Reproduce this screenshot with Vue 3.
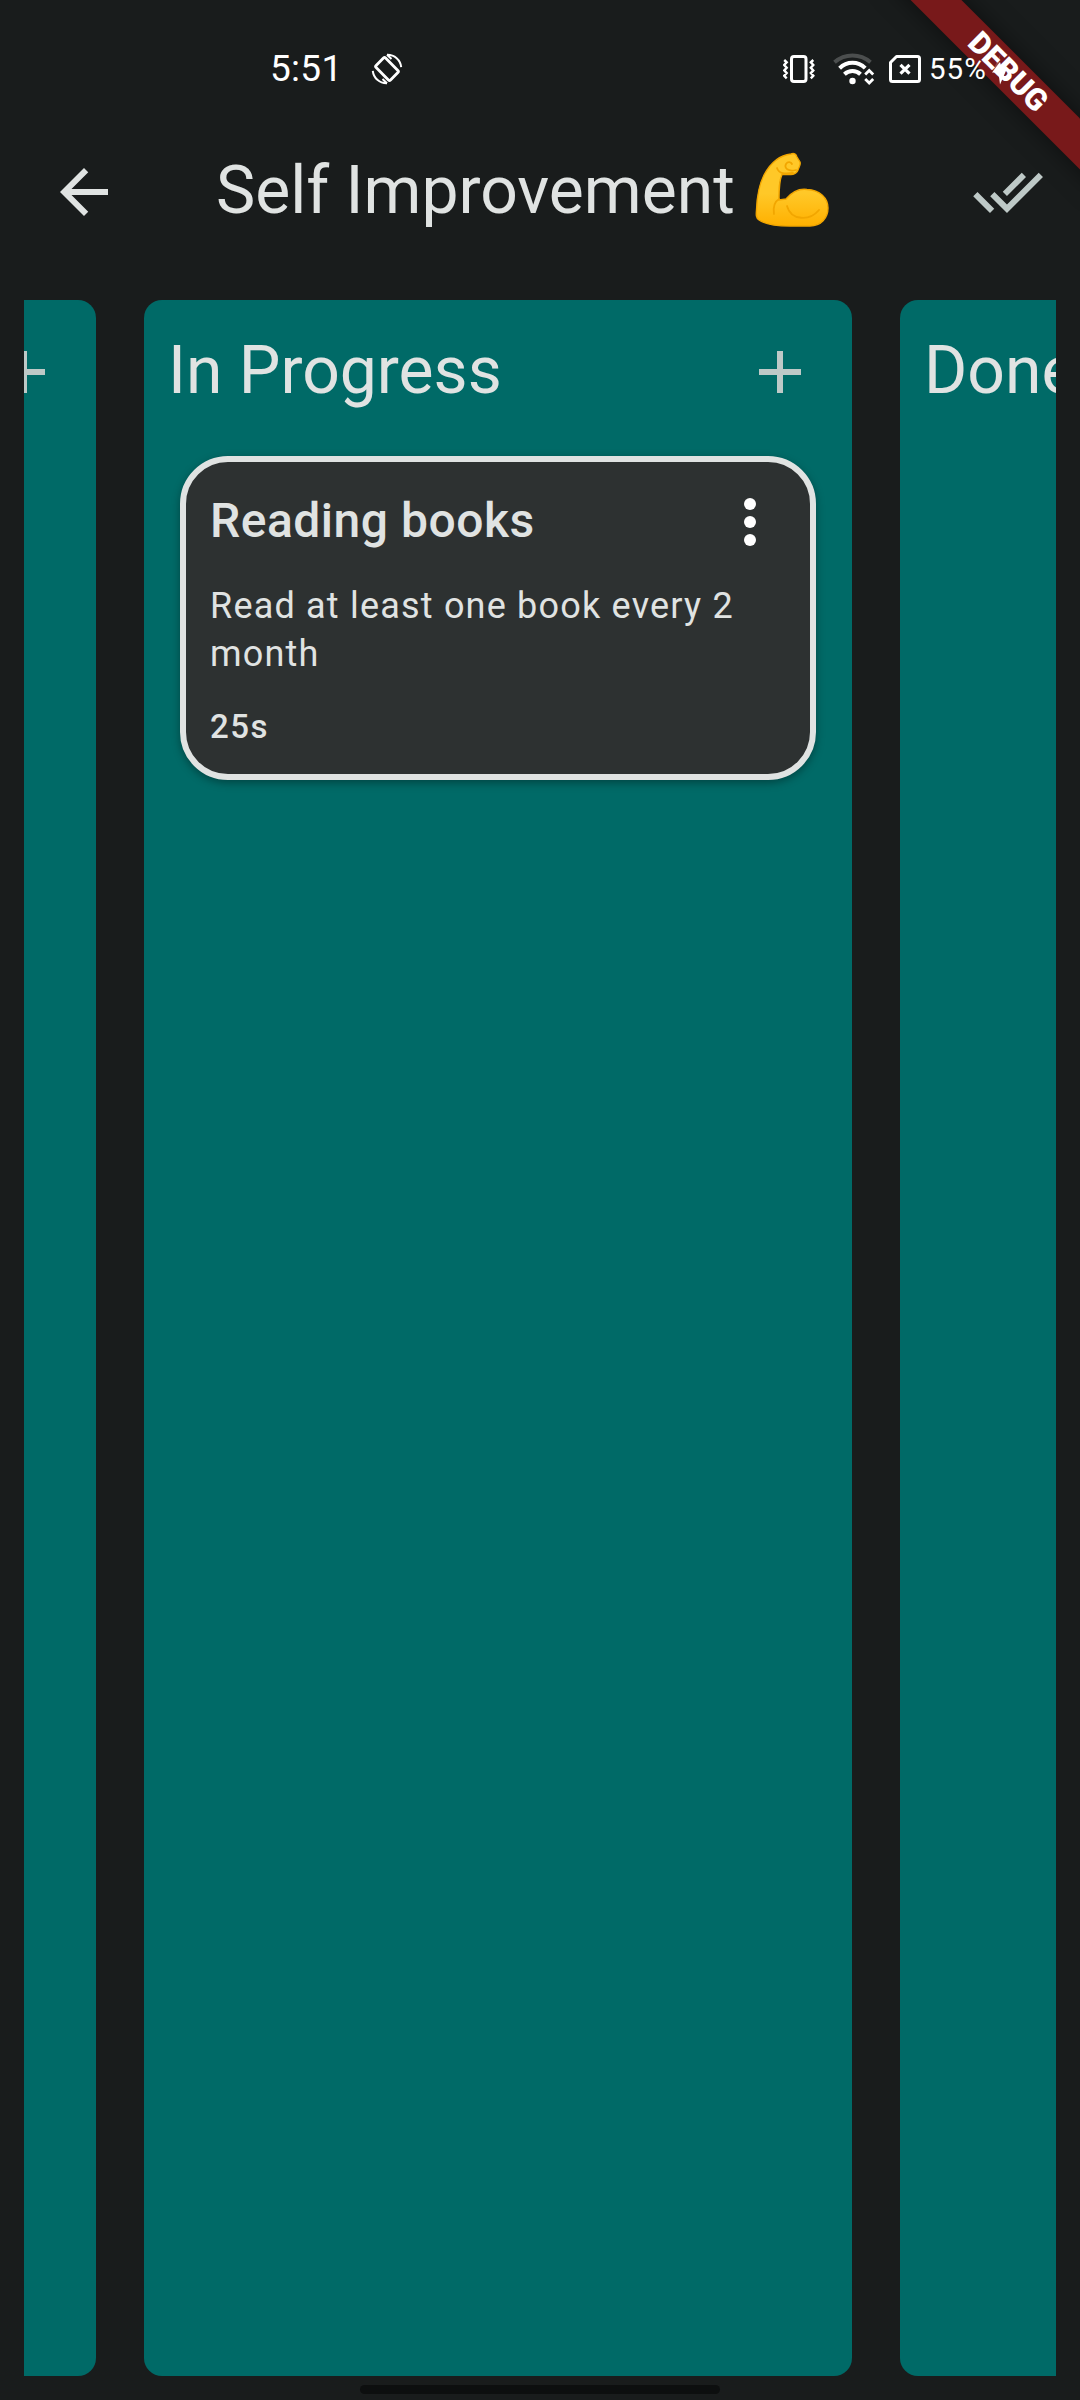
<script setup>
const columns = [
  { title: 'To Do', cards: [] },
  {
    title: 'In Progress',
    cards: [
      { title: 'Reading books', text: 'Read at least one book every 2 month', time: '25s' },
    ],
  },
  { title: 'Done', cards: [] },
]
</script>

<template>
  <div class="screen">
    <div class="status">
      <span class="clock">5:51</span>
      <svg class="rotate" width="32" height="32" viewBox="0 0 32 32" fill="none" stroke="#fff">
        <rect x="9.3" y="5.8" width="13.4" height="20.4" rx="1.5" stroke-width="2.8" transform="rotate(-45 16 16)" />
        <path d="M16 1.8C23.5 1.6 29.5 7 30.2 14.2M16 1.8l4.5 4.2M16 30.2C8.5 30.4 2.5 25 1.8 17.8M16 30.2l-4.5-4.2" stroke-width="2" />
      </svg>
      <div class="status-right">
        <svg class="vibrate" width="32" height="30" viewBox="0 0 32 30" fill="none" stroke="#fff">
          <rect x="8.5" y="2.5" width="14.5" height="25" rx="2.5" stroke-width="3" />
          <path d="M1.2 6l2.5 2.3-2.5 2.7 2.5 2.7-2.5 2.7 2.5 2.7-2.5 2.7 2.5 2.5M30.3 6l-2.5 2.3 2.5 2.7-2.5 2.7 2.5 2.7-2.5 2.7 2.5 2.7-2.5 2.5" stroke-width="2.4" />
        </svg>
        <svg class="wifi" width="42" height="32" viewBox="0 0 42 32" fill="none">
          <path d="M1.5 9.2C12 .2 27 .2 37.5 9.2" stroke="#4b4e4e" stroke-width="4" />
          <path d="M6.6 15.2C14 8 25 8 32.2 15.2M11.4 21.2C16 17 23 17 27.5 21.2" stroke="#fff" stroke-width="4" />
          <circle cx="19.5" cy="28" r="3.2" fill="#fff" />
          <path d="M32.2 21.5l4-4 4 4M32.2 26l4 4 4-4" stroke="#fff" stroke-width="2.8" />
        </svg>
        <svg class="sim" width="32" height="28" viewBox="0 0 32 28" fill="none" stroke="#fff">
          <path d="M7.5 1.5H28.5a2 2 0 0 1 2 2V24.5a2 2 0 0 1-2 2H3.5a2 2 0 0 1-2-2V7.5Z" stroke-width="3" stroke-linejoin="round" />
          <path d="M11.5 9.8l9 8.8M20.5 9.8l-9 8.8" stroke-width="3.2" />
        </svg>
        <span class="percent">55%</span>
        <svg class="bolt" width="16" height="32" viewBox="0 0 16 32">
          <path d="M8.5 1L1 17.5H7V9Z" fill="#fff" opacity="0.2" />
          <path d="M8 9L0 19.5H6.5L8 31.5L15 15.5H10Z" fill="#fff" />
        </svg>
      </div>
    </div>

    <header class="bar">
      <svg class="back" width="72" height="72" viewBox="0 0 24 24" fill="#e0e3e2"><path d="M20 11H7.830l5.590-5.590L12 4l-8 8 8 8 1.410-1.410L7.830 13H20v-2z" /></svg>
      <h1>Self Improvement</h1>
      <svg class="arm" width="76" height="76" viewBox="0 0 76 76">
        <defs>
          <linearGradient id="skin" x1="0" y1="0" x2="0" y2="1">
            <stop offset="0.55" stop-color="#ffc828" />
            <stop offset="1" stop-color="#ffb000" />
          </linearGradient>
        </defs>
        <path d="M37 2C40 .8 42 2 43 5L46 10C47 13 45 15 44 18C42 23 38 23 28 22.500C25 29 25 37 25 48L32 47C38 40 46 36.500 53 37.500C66 38 74 46 74 56C74 66 67 74 56 74H36C23 74 11 72 5 68C2 66 2 63 2.500 58C3 43 5 33 10 23C17 10 27 3 37 2Z" fill="url(#skin)" stroke="#f2a600" stroke-width="1.400" />
        <path d="M23 16C25 22 31 22 39 21M42 18C34 20 30 16 32 12C34 9 37 10 38 12M25 47C20 50 19 55 20 62M33 54C37 69 56 69 65 58" fill="none" stroke="#f2a600" stroke-width="1.800" stroke-linecap="round" />
      </svg>
      <svg class="all" width="72" height="72" viewBox="0 0 24 24" fill="#bec9c7"><path d="M18 7l-1.410-1.410-6.340 6.340 1.410 1.410L18 7zm4.240-1.410L11.660 16.170 7.480 12l-1.410 1.410L11.660 19l12-12-1.420-1.410zM.410 13.410L6 19l1.410-1.410L1.830 12 .410 13.410z" /></svg>
    </header>

    <main class="board">
      <section v-for="column in columns" :key="column.title" class="column">
        <div class="head">
          <h2>{{ column.title }}</h2>
          <svg width="72" height="72" viewBox="0 0 24 24" fill="#bec9c7"><path d="M19 13h-6v6h-2v-6H5v-2h6V5h2v6h6v2z" /></svg>
        </div>
        <article v-for="card in column.cards" :key="card.title" class="card">
          <div class="card-head">
            <h3>{{ card.title }}</h3>
            <svg width="72" height="72" viewBox="0 0 24 24" fill="#fff"><circle cx="12" cy="6" r="2" /><circle cx="12" cy="12" r="2" /><circle cx="12" cy="18" r="2" /></svg>
          </div>
          <p>{{ card.text }}</p>
          <span class="time">{{ card.time }}</span>
        </article>
      </section>
    </main>

    <footer class="nav"><i></i></footer>
    <div class="ribbon">DEBUG</div>
  </div>
</template>

<style>
body { margin: 0; background: #191c1c; }
</style>

<style scoped>
.screen {
  position: relative;
  display: flex;
  flex-direction: column;
  width: 1080px;
  height: 2400px;
  overflow: hidden;
  background: #191c1c;
  color: #e0e3e2;
  font-family: Roboto, "Liberation Sans", sans-serif;
}
svg { display: block; flex: none; }
h1, h2, h3, p { margin: 0; font-weight: 400; white-space: nowrap; }
/* The system status bar is drawn over the debug ribbon. */
.status {
  position: relative;
  z-index: 2;
  display: flex;
  align-items: center;
  height: 78px;
  padding: 30px 72px 0 270px;
  color: #fff;
}
.clock { width: 101px; font-size: 37px; line-height: 40px; letter-spacing: 0.3px; }
.status-right { display: flex; align-items: center; margin-left: auto; }
.wifi { margin-left: 18px; }
.sim { margin-left: 14px; }
.percent { margin-left: 8px; width: 62px; font-size: 29.5px; line-height: 40px; letter-spacing: 1px; }
.bolt { margin-left: 1px; }
.bar {
  display: flex;
  align-items: center;
  height: 168px;
  padding: 0 36px 0 48px;
}
h1 { margin: 0 0 2px 96px; width: 538px; font-size: 66px; line-height: 84px; }
.arm { margin-bottom: 4px; }
.all { margin-left: auto; }
.board {
  display: flex;
  justify-content: center;
  gap: 48px;
  height: 2076px;
  margin: 24px 24px 0;
  overflow: hidden;
}
/* The active column rests 42px left of the centre. */
.column {
  flex: none;
  box-sizing: border-box;
  width: 708px;
  border-radius: 18px;
  background: #006a67;
  translate: -42px 0;
}
.head {
  display: flex;
  align-items: center;
  justify-content: space-between;
  height: 144px;
  padding: 0 36px 0 24px;
}
h2 { margin-bottom: 2px; font-size: 66px; line-height: 84px; }
.card {
  box-sizing: border-box;
  height: 324px;
  margin: 12px 36px;
  padding: 24px;
  border: 6px solid #e0e3e2;
  border-radius: 48px;
  background: #2d3131;
  box-shadow: 0 3px 9px rgba(0, 0, 0, 0.35);
}
.card-head {
  display: flex;
  align-items: center;
  justify-content: space-between;
  height: 72px;
}
h3 { margin-bottom: 2px; font-size: 48px; line-height: 70px; font-weight: 500; letter-spacing: 0.5px; }
p { margin-top: 24px; font-size: 36px; line-height: 48px; letter-spacing: 1.2px; white-space: normal; }
.time { display: block; margin-top: 24px; font-size: 33px; line-height: 49px; font-weight: 500; letter-spacing: 1.5px; }
.nav { display: flex; justify-content: center; padding-top: 9px; }
.nav i { width: 360px; height: 9px; border-radius: 5px; background: #0d0f0f; }
.ribbon {
  position: absolute;
  top: 54px;
  left: 858px;
  width: 300px;
  height: 36px;
  rotate: 45deg;
  background: #78191a;
  box-shadow: 0 0 24px rgba(0, 0, 0, 0.5);
  color: #fff;
  font-size: 30.6px;
  font-weight: 900;
  line-height: 36px;
  text-align: center;
}
</style>
